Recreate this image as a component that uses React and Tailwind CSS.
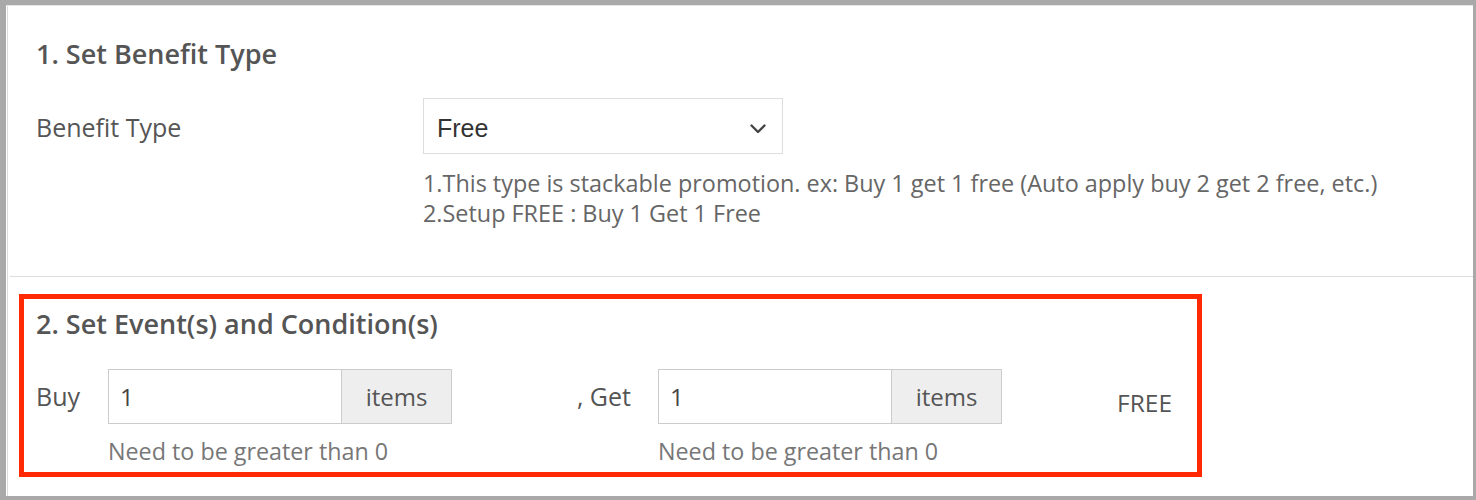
import React from "react";

const font = { fontFamily: '"Open Sans", "Liberation Sans", sans-serif' };

const InputGroup = ({ value }) => (
  <div className="w-[344px]">
    <div className="flex h-[55px] border border-[#cccccc] bg-white">
      <div className="flex-1 flex items-center pl-[11px] text-[24px] text-[#444444]">{value}</div>
      <div className="w-[110px] flex items-center justify-center bg-[#eeeeee] border-l border-[#cccccc] text-[24px] text-[#555555]">items</div>
    </div>
    <div className="mt-[12px] text-[23.3px] leading-[30px] text-[#777777]">Need to be greater than 0</div>
  </div>
);

const App = () => {
  return (
    <div className="w-[1476px] h-[500px] bg-[#a9a9a9] pt-[5px] pl-[6px] pr-[3px] pb-[4px]" style={font}>
      <div className="h-full bg-white border-t border-[#e6e6e6] pl-[1px]">
        <div className="h-full bg-white border-l border-[#dddddd] pl-[2px]">
          {/* section 1 */}
          <div className="pl-[26px] pt-[31px] h-[271px] border-b border-[#dddddd]">
            <div className="text-[27px] font-semibold text-[#555555] leading-[34px]">1. Set Benefit Type</div>
            <div className="flex mt-[27px]">
              <div className="w-[387px] h-[56px] pt-[4px] flex items-center text-[25px] text-[#555555]">Benefit Type</div>
              <div>
                <div className="w-[360px] h-[56px] border border-[#dddddd] flex items-center justify-between pt-[5px] pl-[13px] pr-[16px]">
                  <span className="text-[25px] text-[#333333]" style={{ fontFamily: '"Liberation Sans", Arial, sans-serif' }}>Free</span>
                  <svg width="16" height="10" viewBox="0 0 16 10">
                    <polyline points="1.5,1.5 8,8 14.5,1.5" fill="none" stroke="#444444" strokeWidth="2.4" strokeLinecap="round" strokeLinejoin="round" />
                  </svg>
                </div>
                <div className="mt-[14px] text-[23.4px] leading-[30px] text-[#666666]">
                  <div>1.This type is stackable promotion. ex: Buy 1 get 1 free (Auto apply buy 2 get 2 free, etc.)</div>
                  <div>2.Setup FREE : Buy 1 Get 1 Free</div>
                </div>
              </div>
            </div>
          </div>
          {/* section 2 */}
          <div className="pl-[9px] pt-[17px]">
            <div className="w-[1183px] h-[183px] border-[5px] border-[#ff2a04] pl-[12px] pt-[8px]">
              <div className="text-[27px] font-semibold text-[#555555] leading-[34px]">2. Set Event(s) and Condition(s)</div>
              <div className="flex mt-[28px]">
                <div className="w-[72px] h-[56px] flex items-center text-[25px] text-[#555555]">Buy</div>
                <InputGroup value="1" />
                <div className="w-[206px] h-[56px] pr-[27px] flex items-center justify-end text-[25px] text-[#555555]">, Get</div>
                <InputGroup value="1" />
                <div className="ml-[115px] h-[56px] pt-[12px] flex items-center text-[24.5px] text-[#555555]">FREE</div>
              </div>
            </div>
          </div>
        </div>
      </div>
    </div>
  );
};

export default App;
